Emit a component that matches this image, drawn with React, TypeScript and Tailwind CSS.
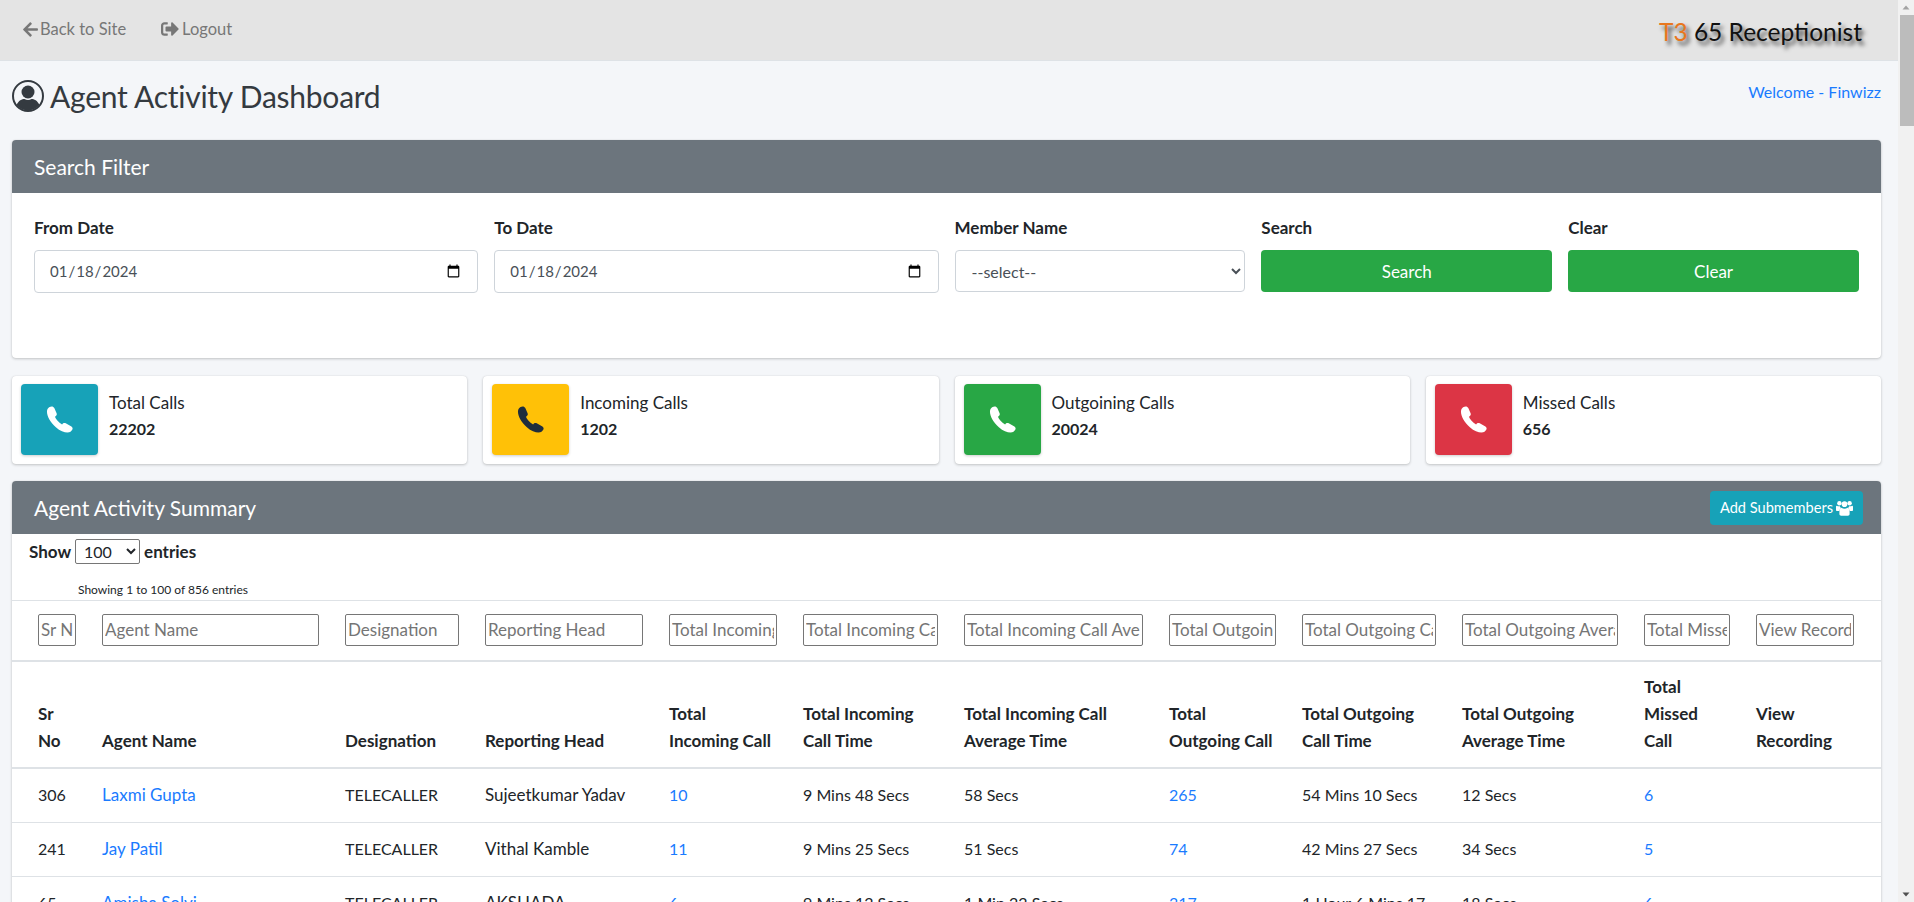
import React from 'react';
import { FaArrowLeft, FaSignOutAlt } from 'react-icons/fa';

const colWidths = [
  'w-[77px]', 'w-[243px]', 'w-[140px]', 'w-[184px]', 'w-[134px]', 'w-[161px]',
  'w-[205px]', 'w-[133px]', 'w-[160px]', 'w-[182px]', 'w-[112px]', 'w-[138px]',
];

const colText = [
  'text-[16px]', 'text-[17px]', 'text-[16px]', 'text-[17px]', 'text-[16px]', 'text-[16px]',
  'text-[16px]', 'text-[16px]', 'text-[16px]', 'text-[16px]', 'text-[16px]', 'text-[16px]',
];

const filters = [
  'Sr No', 'Agent Name', 'Designation', 'Reporting Head', 'Total Incoming Call',
  'Total Incoming Call Time', 'Total Incoming Call Average Time', 'Total Outgoing Call',
  'Total Outgoing Call Time', 'Total Outgoing Average Time', 'Total Missed Call', 'View Recording',
];

const headers = [
  ['Sr', 'No'], ['Agent Name'], ['Designation'], ['Reporting Head'], ['Total', 'Incoming Call'],
  ['Total Incoming', 'Call Time'], ['Total Incoming Call', 'Average Time'], ['Total', 'Outgoing Call'],
  ['Total Outgoing', 'Call Time'], ['Total Outgoing', 'Average Time'], ['Total', 'Missed', 'Call'], ['View', 'Recording'],
];

const rows = [
  ['306', 'Laxmi Gupta', 'TELECALLER', 'Sujeetkumar Yadav', '10', '9 Mins 48 Secs', '58 Secs', '265', '54 Mins 10 Secs', '12 Secs', '6', ''],
  ['241', 'Jay Patil', 'TELECALLER', 'Vithal Kamble', '11', '9 Mins 25 Secs', '51 Secs', '74', '42 Mins 27 Secs', '34 Secs', '5', ''],
  ['65', 'Amisha Solvi', 'TELECALLER', 'AKSHADA', '6', '9 Mins 12 Secs', '1 Min 22 Secs', '317', '1 Hour 6 Mins 17 Secs', '18 Secs', '6', ''],
];

const linkCols = [1, 4, 7, 10];

const stats = [
  { label: 'Total Calls', value: '22202', box: 'bg-[#17a2b8] text-white' },
  { label: 'Incoming Calls', value: '1202', box: 'bg-[#ffc107] text-[#1f2d3d]' },
  { label: 'Outgoining Calls', value: '20024', box: 'bg-[#28a745] text-white' },
  { label: 'Missed Calls', value: '656', box: 'bg-[#dc3545] text-white' },
];

function PhoneIcon() {
  return (
    <svg viewBox="0 0 26 26" className="w-[27px] h-[27px]" fill="currentColor">
      <path d="M3 1.2C5 0 7 0 8 2l2.2 5c.5 1.4 0 2.4-1.6 3.4 1 2.7 3.4 5.4 6.9 7.4 1-1.2 2-1.700 3.500-1.100l5.500 3c1.400.9 1.400 2.400.6 3.500l-1.500 1.700C21 26.500 15 25.500 9.500 20.500 3.500 15 .5 9 1 4.500c.1-1.300 1-2.500 2-3.300z" />
    </svg>
  );
}

function UserIcon() {
  return (
    <svg viewBox="0 0 32 32" className="w-8 h-8 shrink-0 text-[#343a40]" fill="currentColor">
      <circle cx="16" cy="16" r="15" fill="none" stroke="currentColor" strokeWidth="2" />
      <circle cx="16" cy="12" r="6.500" />
      <path d="M4.500 25c2-4.500 5.500-6 8-6 1 .6 2.200 1 3.500 1s2.500-.4 3.500-1c2.500 0 6 1.500 8 6-2.800 3.400-6.900 5.500-11.500 5.500S7.300 28.400 4.500 25z" />
    </svg>
  );
}

function UsersIcon() {
  return (
    <svg viewBox="0 0 20 18" className="w-[17px] h-[16px]" fill="currentColor">
      <circle cx="4" cy="3.500" r="2.600" />
      <circle cx="16" cy="3.500" r="2.600" />
      <circle cx="10" cy="4.500" r="3.300" />
      <path d="M0 7.500c0-.8.8-1.200 1.500-1 .8.400 2 .6 3 .3.300 1 1 1.800 1.700 2.300-1.200.8-2 2-2.200 3.400H1c-.6 0-1-.4-1-1zM20 7.500c0-.8-.8-1.200-1.500-1-.8.400-2 .6-3 .3-.3 1-1 1.800-1.700 2.300 1.200.8 2 2 2.200 3.400H19c.6 0 1-.4 1-1z" />
      <path d="M6.500 8.700c1 .9 2.200 1.300 3.500 1.300s2.500-.4 3.500-1.300c1.300.5 2.500 2 2.500 4.300v3c0 1.100-.9 2-2 2H6c-1.100 0-2-.9-2-2v-3c0-2.300 1.200-3.800 2.500-4.300z" />
    </svg>
  );
}

function CardHeader({ title, children }: { title: string; children?: React.ReactNode }) {
  return (
    <div className="h-[53px] bg-[#6c757d] rounded-t-[4px] flex items-center justify-between pl-[22px] pr-[18px] text-white">
      <h3 className="text-[21px] leading-none">{title}</h3>
      {children}
    </div>
  );
}

export default function App() {
  return (
    <div className="h-screen overflow-hidden flex bg-[#f4f6f9] text-[#212529] text-[16px] leading-[27px] [font-family:Lato,sans-serif]">
      <div className="flex-1 min-w-0">
        {/* top bar */}
        <div className="h-[61px] bg-[#e4e4e4] border-b border-[#dee2e6] flex items-center justify-between pl-[22px] pr-[36px]">
          <div className="flex items-center gap-[35px] text-[#777777] text-[16.5px] -mt-[2px]">
            <a className="flex items-center gap-[1px]"><FaArrowLeft className="text-[17px]" />Back to Site</a>
            <a className="flex items-center gap-[3px]"><FaSignOutAlt className="text-[18px]" />Logout</a>
          </div>
          <div className="text-[24.5px] leading-none text-[#111111] mt-[4px] [text-shadow:3px_4px_4px_#444]">
            <span className="text-[#e8771f]">T3</span> 65 Receptionist
          </div>
        </div>

        <div className="pl-3 pr-[17px]">
          {/* page title */}
          <div className="h-[79px] flex items-start justify-between pt-[16px]">
            <div className="flex items-center gap-[6px] text-[#343a40]">
              <UserIcon />
              <h1 className="text-[30px] leading-[38px] tracking-[-0.25px]">Agent Activity Dashboard</h1>
            </div>
            <a className="text-[#1a7bff] mt-px">Welcome - Finwizz</a>
          </div>

          {/* search filter */}
          <div className="bg-white rounded-[4px] shadow-[0_0_1px_rgba(0,0,0,0.125),0_1px_3px_rgba(0,0,0,0.2)]">
            <CardHeader title="Search Filter" />
            <div className="h-[165px] px-[22px] pt-[21px] grid grid-cols-12 gap-x-4 items-start">
              <div className="col-span-3">
                <label className="block font-bold mb-[9px] text-[17px]">From Date</label>
                <input type="date" defaultValue="2024-01-18" className="w-full h-[43px] px-[14px] border border-[#ced4da] rounded-[4px] text-[#495057] text-[15px] bg-white" />
              </div>
              <div className="col-span-3">
                <label className="block font-bold mb-[9px] text-[17px]">To Date</label>
                <input type="date" defaultValue="2024-01-18" className="w-full h-[43px] px-[14px] border border-[#ced4da] rounded-[4px] text-[#495057] text-[15px] bg-white" />
              </div>
              <div className="col-span-2">
                <label className="block font-bold mb-[9px] text-[17px]">Member Name</label>
                <select className="w-full h-[42px] px-3 border border-[#ced4da] rounded-[4px] text-[#495057] bg-white">
                  <option>--select--</option>
                </select>
              </div>
              <div className="col-span-2">
                <label className="block font-bold mb-[9px] text-[17px]">Search</label>
                <button className="w-full h-[42px] rounded-[4px] bg-[#28a745] text-white text-[17px]">Search</button>
              </div>
              <div className="col-span-2">
                <label className="block font-bold mb-[9px] text-[17px]">Clear</label>
                <button className="w-full h-[42px] rounded-[4px] bg-[#28a745] text-white text-[17px]">Clear</button>
              </div>
            </div>
          </div>

          {/* stat boxes */}
          <div className="mt-[18px] grid grid-cols-4 gap-4">
            {stats.map((s) => (
              <div key={s.label} className="h-[88px] bg-white rounded-[4px] pt-2 pl-[9px] flex shadow-[0_0_1px_rgba(0,0,0,0.125),0_1px_3px_rgba(0,0,0,0.2)]">
                <div className={`w-[77px] h-[71px] rounded-[4px] flex items-center justify-center shadow-[0_1px_3px_rgba(0,0,0,0.2)] ${s.box}`}>
                  <PhoneIcon />
                </div>
                <div className="ml-[11px] mt-[6px] leading-[26px]">
                  <div className="text-[17px]">{s.label}</div>
                  <div className="font-bold">{s.value}</div>
                </div>
              </div>
            ))}
          </div>

          {/* summary table */}
          <div className="mt-[17px] bg-white rounded-t-[4px] shadow-[0_0_1px_rgba(0,0,0,0.125),0_1px_3px_rgba(0,0,0,0.2)]">
            <CardHeader title="Agent Activity Summary">
              <button className="h-[34px] px-[10px] rounded-[4px] bg-[#17a2b8] text-white text-[14.6px] flex items-center gap-[3px] whitespace-nowrap">
                Add Submembers <UsersIcon />
              </button>
            </CardHeader>
            <div className="h-[47px] pl-[17px] pt-[4px] flex items-start gap-1 font-bold text-[17px]">
              Show
              <select defaultValue="100" className="w-[65px] h-[25px] mt-px border border-[#767676] rounded-[2px] bg-white font-normal pl-1 text-[16px]">
                <option>100</option>
              </select>
              entries
            </div>
            <div className="h-[19px] pl-[66px] text-[12px] leading-[18px]">Showing 1 to 100 of 856 entries</div>
            <table className="w-full table-fixed border-separate border-spacing-0">
              <colgroup>
                {colWidths.map((w, i) => <col key={i} className={w} />)}
              </colgroup>
              <thead>
                <tr>
                  {filters.map((f) => (
                    <th key={f} className="border-t border-b-2 border-[#dee2e6] pt-[13px] pb-[14px] px-[13px] first:pl-[26px] last:pr-[27px]">
                      <input placeholder={f} className="block w-full h-8 px-[2px] pb-[2px] border border-[#767676] rounded-[2px] font-normal text-[17px] placeholder:text-[#757575]" />
                    </th>
                  ))}
                </tr>
                <tr>
                  {headers.map((lines, i) => (
                    <th key={i} className="border-b-2 border-[#dee2e6] pt-[11px] pb-[13px] px-[13px] first:pl-[26px] last:pr-[27px] text-left align-bottom font-bold text-[17px] leading-[27px] whitespace-nowrap">
                      {lines.map((l) => <div key={l}>{l}</div>)}
                    </th>
                  ))}
                </tr>
              </thead>
              <tbody>
                {rows.map((r) => (
                  <tr key={r[0]}>
                    {r.map((c, i) => (
                      <td key={i} className={`border-b border-[#dee2e6] pt-[12px] pb-[14px] px-[13px] first:pl-[26px] last:pr-[27px] align-top leading-[27px] ${colText[i]}`}>
                        {linkCols.includes(i) ? <a className="text-[#1a7bff]">{c}</a> : c}
                      </td>
                    ))}
                  </tr>
                ))}
              </tbody>
            </table>
          </div>
        </div>
      </div>

      {/* page scrollbar */}
      <div className="w-4 h-full shrink-0 bg-[#f1f1f1] flex flex-col items-center justify-between">
        <div className="w-full">
          <svg viewBox="0 0 16 15" className="w-4 h-[15px] text-[#a3a3a3]" fill="currentColor"><path d="M4.500 9.500L8 5.500l3.500 4z" /></svg>
          <div className="ml-[2px] w-[14px] h-[111px] bg-[#bcbcbc]" />
        </div>
        <svg viewBox="0 0 16 15" className="w-4 h-[15px] text-[#505050]" fill="currentColor"><path d="M4.500 5.500L8 9.500l3.500-4z" /></svg>
      </div>
    </div>
  );
}
